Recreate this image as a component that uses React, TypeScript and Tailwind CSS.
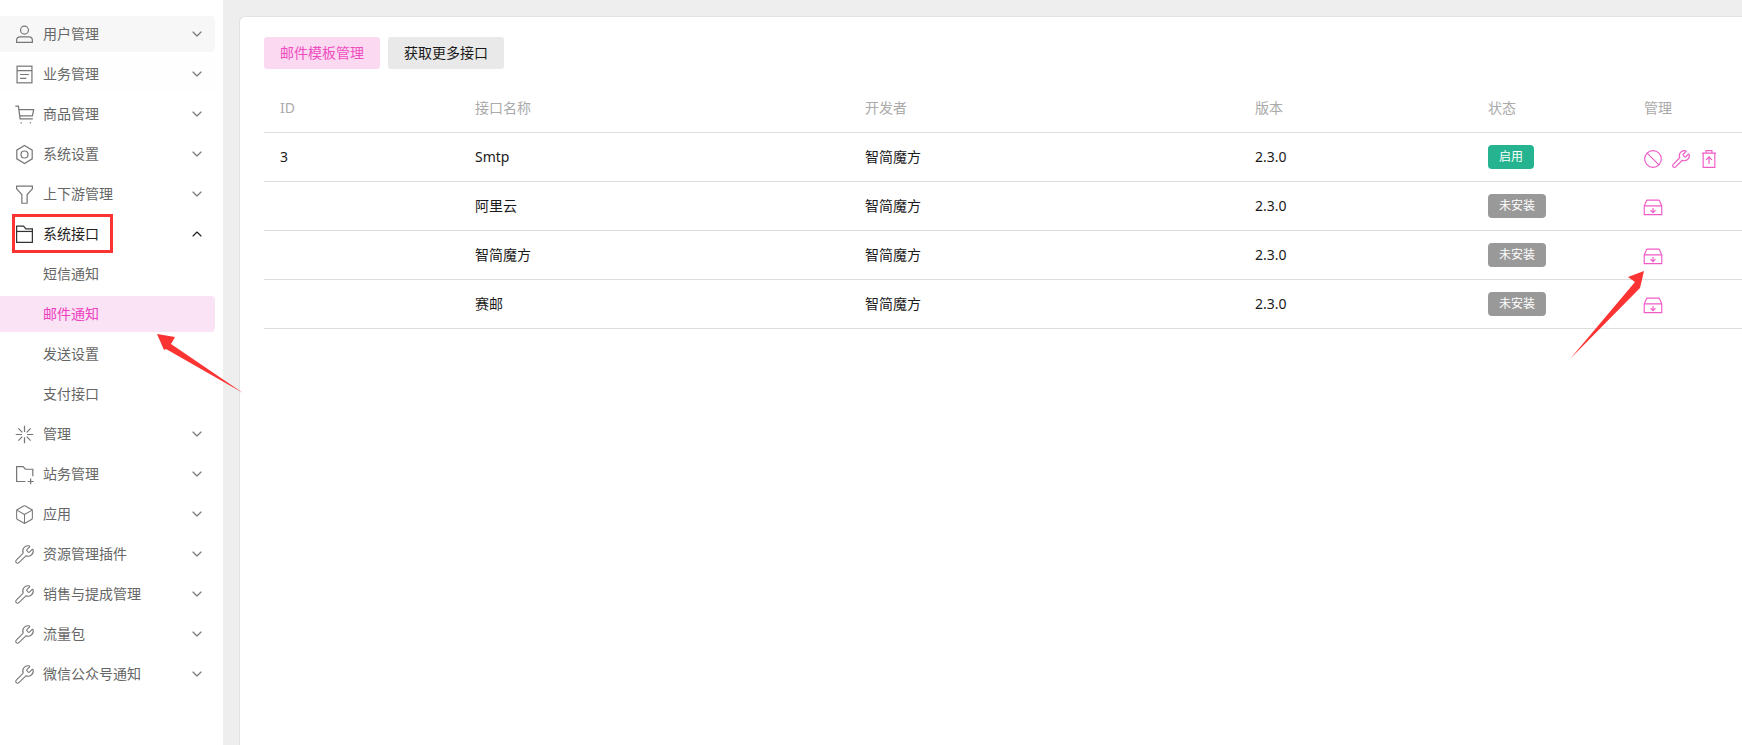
import type { ReactNode } from 'react';
import { Ban, Box, ChevronDown, ChevronUp, Wrench } from 'lucide-react';

function Glyph({ children, className = 'h-[21px] w-[21px]' }: { children: ReactNode; className?: string }) {
  return (
    <svg className={className} fill="none" stroke="currentColor" strokeWidth="1.4" viewBox="0 0 24 24">
      {children}
    </svg>
  );
}

const UserIcon = () => (
  <Glyph>
    <circle cx="12" cy="7" r="4.500" />
    <path d="M3 21v-2.500c0-2.200 1.800-3.700 4-3.700h10c2.200 0 4 1.500 4 3.700V21z" />
  </Glyph>
);
const ArticleIcon = () => (
  <Glyph>
    <rect height="19" width="17" x="3.500" y="2.500" />
    <path d="M3.500 7.500h17M7 12h10M7 16.500h7" />
  </Glyph>
);
const CartIcon = () => (
  <Glyph>
    <path d="M1.500 2.500h3.500l2 14.500h14.500M5.500 6.500h17l-1.500 7H6.500" />
    <path d="M7.500 21.500h1.500M18 21.500h1.500" />
  </Glyph>
);
const SettingIcon = () => (
  <Glyph>
    <path d="M12 1.800 20.800 7v10L12 22.200 3.200 17V7z" />
    <circle cx="12" cy="12" r="4" />
  </Glyph>
);
const FilterIcon = () => (
  <Glyph>
    <path d="M3 2.500h18v3L15 12v10H9V12L3 5.500z" />
  </Glyph>
);
const FolderIcon = () => (
  <Glyph>
    <path d="M3 21V2.500h8l2.500 3H21V21z" />
    <path d="M3 8.500h18" />
  </Glyph>
);
const FolderAddIcon = () => (
  <Glyph>
    <path d="M13 20H3V3h7.500l2.500 3h8.500v8" />
    <path d="M19 16.500v6.500M15.500 20h7" />
  </Glyph>
);
const SparkIcon = () => (
  <Glyph>
    <path d="M12 2v7M12 15v7M2 12h7M15 12h7M5 5l4.500 4.500M14.500 14.500 19 19M19 5l-4.500 4.500M9.500 14.500 5 19" />
  </Glyph>
);
const TrashUpIcon = () => (
  <Glyph className="h-5 w-5">
    <path d="M3.500 5h17M8.500 5V2h7v3M5 5v17h14V5" />
    <path d="M12 18v-8M8.500 13l3.500-3.500 3.500 3.500" />
  </Glyph>
);
const InstallIcon = () => (
  <Glyph className="h-5 w-5">
    <path d="M1.500 9.500 4 3.500c.3-.6.8-1 1.500-1h13c.7 0 1.200.4 1.500 1l2.500 6V20h-21z" />
    <path d="M1.500 9.500h21M12 12v5M9 14.500l3 3 3-3" />
  </Glyph>
);

const sideLucide = 'h-[21px] w-[21px]';
const rowLucide = 'h-5 w-5';

const menuItems: { label: string; icon?: ReactNode; open?: boolean; active?: boolean; hovered?: boolean; faint?: boolean }[] = [
  { label: '用户管理', icon: <UserIcon />, hovered: true },
  { label: '业务管理', icon: <ArticleIcon />, faint: true },
  { label: '商品管理', icon: <CartIcon /> },
  { label: '系统设置', icon: <SettingIcon /> },
  { label: '上下游管理', icon: <FilterIcon /> },
  { label: '系统接口', icon: <FolderIcon />, open: true },
  { label: '短信通知' },
  { label: '邮件通知', active: true },
  { label: '发送设置' },
  { label: '支付接口' },
  { label: '管理', icon: <SparkIcon /> },
  { label: '站务管理', icon: <FolderAddIcon /> },
  { label: '应用', icon: <Box className={sideLucide} strokeWidth={1.2} /> },
  { label: '资源管理插件', icon: <Wrench className={sideLucide} strokeWidth={1.2} /> },
  { label: '销售与提成管理', icon: <Wrench className={sideLucide} strokeWidth={1.2} /> },
  { label: '流量包', icon: <Wrench className={sideLucide} strokeWidth={1.2} /> },
  { label: '微信公众号通知', icon: <Wrench className={sideLucide} strokeWidth={1.2} /> },
];

const rows = [
  { id: '3', name: 'Smtp', installed: true },
  { id: '', name: '阿里云', installed: false },
  { id: '', name: '智简魔方', installed: false },
  { id: '', name: '赛邮', installed: false },
];

const gridCols = 'grid grid-cols-[195px_390px_390px_233px_156px_200px] items-center';

function SideItem({ item }: { item: (typeof menuItems)[number] }) {
  const isChild = !item.icon;
  let tone = 'text-[#666]';
  if (item.active) tone = 'bg-[#fae3f5] text-[#ee3fc0]';
  if (item.hovered) tone = 'bg-[#f7f7f7] text-[#666]';
  if (item.faint) tone = 'bg-[#fefefe] text-[#666]';
  return (
    <div className={`flex h-9 items-center rounded-r-[4px] pl-[14px] pr-[10px] ${tone}`}>
      {isChild ? (
        <span className="w-[29px]" />
      ) : (
        <span className={`mr-2 flex w-[21px] justify-center ${item.open ? 'text-[#333]' : 'text-[#777]'}`}>
          {item.icon}
        </span>
      )}
      <span className={`flex-1 text-sm ${item.open ? 'text-[#222]' : ''}`}>{item.label}</span>
      {!isChild &&
        (item.open ? (
          <ChevronUp className="h-4 w-4 text-[#222]" strokeWidth={1.75} />
        ) : (
          <ChevronDown className="h-4 w-4 text-[#777]" strokeWidth={1.75} />
        ))}
    </div>
  );
}

export default function App() {
  return (
    <div className="relative flex h-[745px] w-[1742px] overflow-hidden bg-[#eee] font-['Noto_Sans','Noto_Sans_CJK_SC',sans-serif]">
      <aside className="flex w-[223px] shrink-0 flex-col gap-1 bg-white pr-2 pt-4">
        {menuItems.map((item) => (
          <SideItem item={item} key={item.label} />
        ))}
      </aside>

      <main className="ml-4 mt-4 flex-1 rounded-tl-[6px] border-l border-t border-[#e2e2e2] bg-white pl-6 pt-5">
        <div className="flex gap-2">
          <button className="h-8 w-[116px] rounded-[3px] bg-[#fbd9f1] text-sm text-[#ee4dc0]">邮件模板管理</button>
          <button className="h-8 w-[116px] rounded-[3px] bg-[#e9e9e9] text-sm text-[#1a1a1a]">获取更多接口</button>
        </div>

        <div className={`${gridCols} mt-[17px] h-[47px] border-b border-[#ddd] pb-[3px] pl-4 text-sm text-[#aaa]`}>
          <span>ID</span>
          <span>接口名称</span>
          <span>开发者</span>
          <span>版本</span>
          <span>状态</span>
          <span>管理</span>
        </div>

        {rows.map((row) => (
          <div className={`${gridCols} h-[49px] border-b border-[#ddd] pl-4 text-sm text-[#1a1a1a]`} key={row.name}>
            <span>{row.id}</span>
            <span>{row.name}</span>
            <span>智简魔方</span>
            <span>2.3.0</span>
            <span>
              <span
                className={`inline-flex h-6 items-center rounded-[4px] px-[11px] text-xs text-white ${
                  row.installed ? 'bg-[#25b48f]' : 'bg-[#999]'
                }`}
              >
                {row.installed ? '启用' : '未安装'}
              </span>
            </span>
            <span className="-ml-px mt-[3px] flex items-center gap-2 text-[#f05cc6]">
              {row.installed ? (
                <>
                  <Ban className={rowLucide} strokeWidth={1.4} />
                  <Wrench className={rowLucide} strokeWidth={1.4} />
                  <TrashUpIcon />
                </>
              ) : (
                <InstallIcon />
              )}
            </span>
          </div>
        ))}
      </main>

      {/* annotations drawn over the page */}
      <div className="absolute left-[12px] top-[214px] h-[39px] w-[101px] border-[3px] border-[#fb3333]" />
      <svg className="pointer-events-none absolute left-0 top-0" height="745" width="1742">
        <polygon fill="#fb3333" points="157,334 175,337 171,344 243,393 166,349 164,350" />
        <polygon fill="#fb3333" points="1644,271 1628,277 1635,282 1570,359 1639,289 1640,288" />
      </svg>
    </div>
  );
}
